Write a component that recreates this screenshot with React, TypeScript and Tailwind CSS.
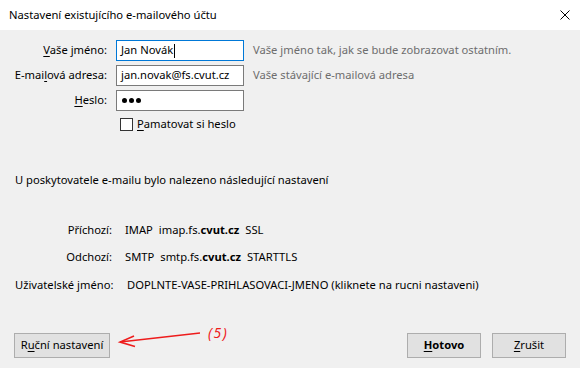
import React from "react";

const font = { fontFamily: '"Segoe UI", "Noto Sans", "Liberation Sans", sans-serif' };

function U({ children }: { children: React.ReactNode }) {
  return <span className="underline underline-offset-2">{children}</span>;
}

function Btn({ children, bold, className = "" }: { children: React.ReactNode; bold?: boolean; className?: string }) {
  return (
    <div
      className={`h-[25px] flex items-center justify-center border border-[#adadad] bg-[#e1e1e1] text-[11.2px] text-black ${bold ? "font-bold" : ""} ${className}`}
    >
      {children}
    </div>
  );
}

export default function App() {
  return (
    <div className="w-[580px] h-[368px] bg-[#f0f0f0] flex flex-col text-[11.2px] text-black overflow-hidden" style={font}>
      {/* title bar */}
      <div className="h-[30px] bg-white flex items-center justify-between pl-[9px] pr-[10px] shrink-0">
        <span>Nastavení existujícího e-mailového účtu</span>
        <svg width="10" height="10" viewBox="0 0 10 10">
          <path d="M0.5 0.5 L9.5 9.5 M9.5 0.5 L0.5 9.5" stroke="#000" strokeWidth="1" />
        </svg>
      </div>

      {/* form */}
      <div className="pt-[10px] flex flex-col gap-[4px]">
        <div className="flex items-center h-[21px]">
          <div className="w-[107px] text-right">
            <U>V</U>aše jméno:
          </div>
          <div className="ml-[9px] w-[128px] h-[21px] border border-[#0078d7] bg-white flex items-center pl-[4px]">
            Jan Novák
            <span className="inline-block w-px h-[14px] bg-black ml-px" />
          </div>
          <div className="ml-[9px] text-[#6d6d6d]">Vaše jméno tak, jak se bude zobrazovat ostatním.</div>
        </div>
        <div className="flex items-center h-[21px]">
          <div className="w-[107px] text-right">
            E-mai<U>l</U>ová adresa:
          </div>
          <div className="ml-[9px] w-[128px] h-[21px] border border-[#7a7a7a] bg-white flex items-center pl-[4px]">
            jan.novak@fs.cvut.cz
          </div>
          <div className="ml-[9px] text-[#6d6d6d]">Vaše stávající e-mailová adresa</div>
        </div>
        <div className="flex items-center h-[21px]">
          <div className="w-[107px] text-right">
            <U>H</U>eslo:
          </div>
          <div className="ml-[9px] w-[128px] h-[21px] border border-[#7a7a7a] bg-white flex items-center pl-[5px] gap-[2px]">
            <span className="w-[5px] h-[5px] rounded-full bg-black" />
            <span className="w-[5px] h-[5px] rounded-full bg-black" />
            <span className="w-[5px] h-[5px] rounded-full bg-black" />
          </div>
        </div>
        <div className="flex items-center h-[19px] pl-[120px]">
          <span className="w-[13px] h-[13px] border border-[#333] bg-white" />
          <span className="ml-[4px]">
            <U>P</U>amatovat si heslo
          </span>
        </div>
      </div>

      {/* results */}
      <div className="mt-[38px] pl-[15px] h-[16px] flex items-center">
        U poskytovatele e-mailu bylo nalezeno následující nastavení
      </div>

      <div className="mt-[34px] flex flex-col gap-[11px]">
        <div className="flex items-center h-[16px]">
          <div className="w-[112px] text-right">Příchozí:</div>
          <div className="ml-[13px] flex">
            <span>IMAP</span>
            <span className="ml-[6px]">
              imap.fs.<b>cvut.cz</b>
            </span>
            <span className="ml-[6px]">SSL</span>
          </div>
        </div>
        <div className="flex items-center h-[16px]">
          <div className="w-[112px] text-right">Odchozí:</div>
          <div className="ml-[13px] flex">
            <span>SMTP</span>
            <span className="ml-[6px]">
              smtp.fs.<b>cvut.cz</b>
            </span>
            <span className="ml-[6px]">STARTTLS</span>
          </div>
        </div>
        <div className="flex items-center h-[16px] mt-[1px]">
          <div className="w-[127px] pl-[15px] whitespace-nowrap">Uživatelské jméno:</div>
          <div className="whitespace-nowrap">DOPLNTE-VASE-PRIHLASOVACI-JMENO (kliknete na rucni nastaveni)</div>
        </div>
      </div>

      {/* buttons */}
      <div className="mt-auto mb-[10px] flex items-center px-[14px]">
        <Btn className="w-[96px]">
          R<U>u</U>ční nastavení
        </Btn>
        <div className="relative flex-1 h-[25px]">
          <svg className="absolute left-0 -top-[12px]" width="130" height="40" viewBox="0 0 130 40">
            <path d="M90 12 L10 21" stroke="#ee1c1c" strokeWidth="1.6" fill="none" />
            <path d="M24 15 L10 21 L25 25.5" stroke="#ee1c1c" strokeWidth="1.6" fill="none" />
          </svg>
          <span className="absolute left-[98px] -top-[11px] text-[#ee1c1c] italic text-[14px] tracking-[1.5px]">(5)</span>
        </div>
        <Btn bold className="w-[74px]">
          <U>H</U>otovo
        </Btn>
        <Btn className="w-[74px] ml-[11px]">
          <U>Z</U>rušit
        </Btn>
      </div>
    </div>
  );
}
